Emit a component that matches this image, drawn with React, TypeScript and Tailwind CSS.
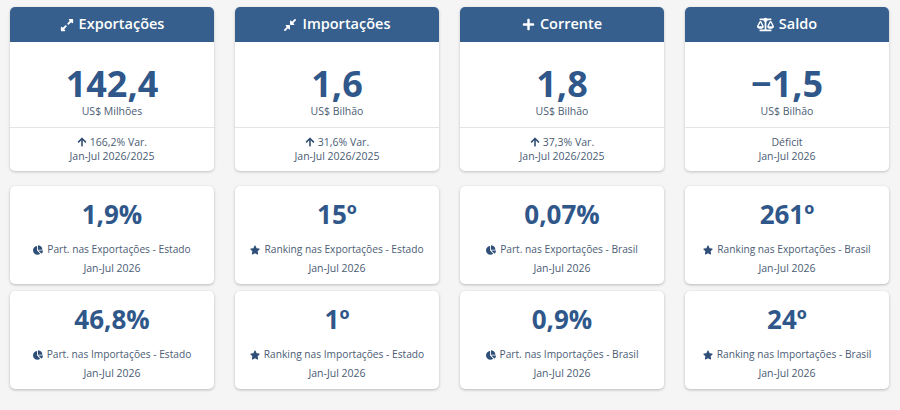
import { FaExpandAlt, FaCompressAlt, FaPlus, FaBalanceScale, FaChartPie, FaStar, FaArrowUp } from "react-icons/fa";
import type { IconType } from "react-icons";

const mainCards: {
  icon: IconType;
  iconSize: string;
  title: string;
  value: string;
  unit: string;
  up: boolean;
  line1: string;
  line2: string;
}[] = [
  { icon: FaExpandAlt, iconSize: "h-[14px] w-[14px]", title: "Exportações", value: "142,4", unit: "US$ Milhões", up: true, line1: "166,2% Var.", line2: "Jan-Jul 2026/2025" },
  { icon: FaCompressAlt, iconSize: "h-[14px] w-[14px]", title: "Importações", value: "1,6", unit: "US$ Bilhão", up: true, line1: "31,6% Var.", line2: "Jan-Jul 2026/2025" },
  { icon: FaPlus, iconSize: "h-[13px] w-[13px]", title: "Corrente", value: "1,8", unit: "US$ Bilhão", up: true, line1: "37,3% Var.", line2: "Jan-Jul 2026/2025" },
  { icon: FaBalanceScale, iconSize: "h-[15px] w-[17px]", title: "Saldo", value: "\u22121,5", unit: "US$ Bilhão", up: false, line1: "Déficit", line2: "Jan-Jul 2026" },
];

const statCards: { icon: IconType; value: string; label: string }[] = [
  { icon: FaChartPie, value: "1,9%", label: "Part. nas Exportações - Estado" },
  { icon: FaStar, value: "15º", label: "Ranking nas Exportações - Estado" },
  { icon: FaChartPie, value: "0,07%", label: "Part. nas Exportações - Brasil" },
  { icon: FaStar, value: "261º", label: "Ranking nas Exportações - Brasil" },
  { icon: FaChartPie, value: "46,8%", label: "Part. nas Importações - Estado" },
  { icon: FaStar, value: "1º", label: "Ranking nas Importações - Estado" },
  { icon: FaChartPie, value: "0,9%", label: "Part. nas Importações - Brasil" },
  { icon: FaStar, value: "24º", label: "Ranking nas Importações - Brasil" },
];

export default function App() {
  return (
    <div
      className="min-h-[410px] w-[900px] bg-[#f5f5f5] pl-[10px] pr-[11px] pt-[7px]"
      style={{ fontFamily: '"Open Sans", "Noto Sans", sans-serif' }}
    >
      <div className="grid grid-cols-4 gap-x-[21px]">
        {mainCards.map((card) => (
          <div
            key={card.title}
            className="overflow-hidden rounded-[5px] bg-white shadow-[0_1px_3px_rgba(0,0,0,0.22)]"
          >
            <div className="flex h-[35px] items-center justify-center gap-[5px] bg-[#375f8e] text-white">
              <card.icon className={card.iconSize} />
              <span className="text-[14.5px] font-semibold leading-none">{card.title}</span>
            </div>
            <div className="border-b border-[#e4e4e4] pb-[7px] pt-[24px] text-center">
              <div className="text-[36px] font-bold leading-none text-[#30578a]">
                {card.value}
              </div>
              <div className="text-[10.5px] leading-[18px] text-[#4b5c74]">{card.unit}</div>
            </div>
            <div className="pb-[8px] pt-[7px] text-center text-[10.5px] leading-[14px] text-[#4b5c74]">
              <div className="flex items-center justify-center gap-[3px]">
                {card.up && <FaArrowUp className="h-[10px] w-[10px] text-[#2c4a70]" />}
                <span>{card.line1}</span>
              </div>
              <div>{card.line2}</div>
            </div>
          </div>
        ))}
      </div>

      <div className="mt-[15px] grid grid-cols-4 gap-x-[21px] gap-y-[7px]">
        {statCards.map((card) => (
          <div
            key={card.label}
            className="h-[98px] rounded-[5px] bg-white pt-[15px] text-center shadow-[0_1px_3px_rgba(0,0,0,0.25)]"
          >
            <div className="text-[26px] font-bold leading-none text-[#30578a]">{card.value}</div>
            <div className="mt-[13px] flex items-center justify-center gap-[4px] text-[10.2px] leading-[19px] text-[#4b5c74]">
              <card.icon className="h-[10px] w-[10px] text-[#2f4f78]" />
              <span>{card.label}</span>
            </div>
            <div className="text-[10.5px] leading-[19px] text-[#4b5c74]">Jan-Jul 2026</div>
          </div>
        ))}
      </div>
    </div>
  );
}
